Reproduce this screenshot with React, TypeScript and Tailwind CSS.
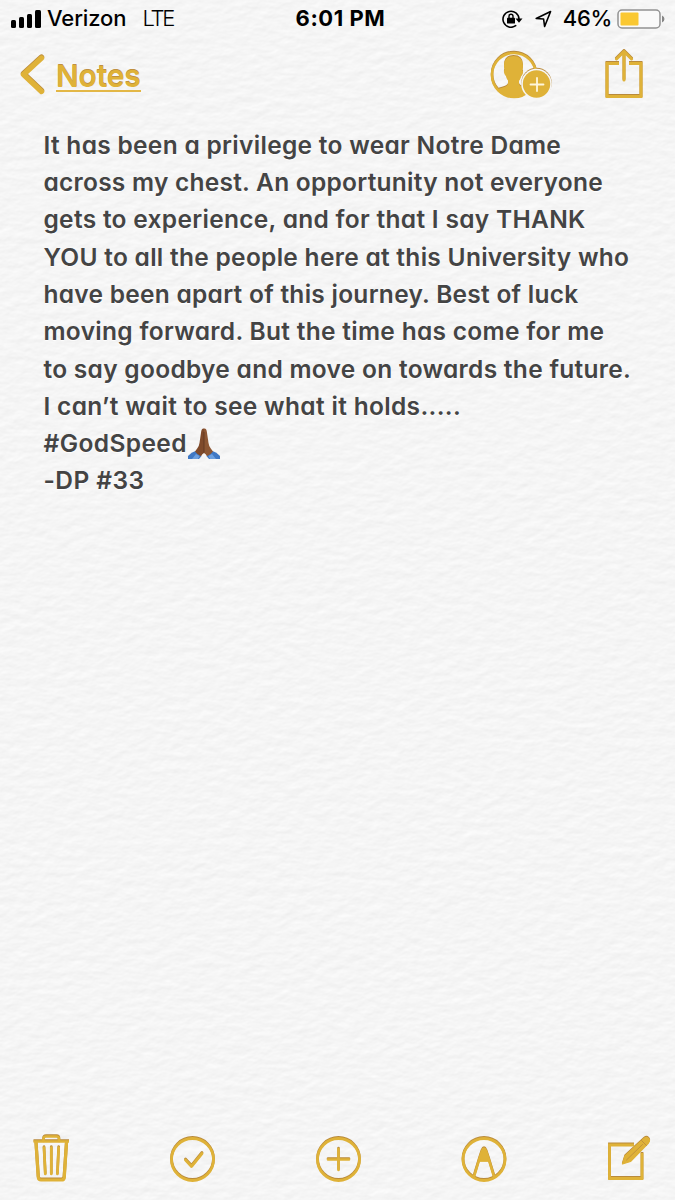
import type { ReactNode } from "react";

interface NoteLine {
  text: string;
  className: string;
  emoji?: boolean;
}

const noteLines: NoteLine[] = [
  { text: "It has been a privilege to wear Notre Dame", className: "tracking-[0.3px]" },
  { text: "across my chest. An opportunity not everyone", className: "tracking-[0.25px]" },
  { text: "gets to experience, and for that I say THANK", className: "tracking-[0.3px]" },
  { text: "YOU to all the people here at this University who", className: "tracking-[0.29px]" },
  { text: "have been apart of this journey. Best of luck", className: "tracking-[0.27px]" },
  { text: "moving forward. But the time has come for me", className: "tracking-[0.31px]" },
  { text: "to say goodbye and move on towards the future.", className: "tracking-[0.29px]" },
  { text: "I can’t wait to see what it holds.....", className: "tracking-[0.33px]" },
  { text: "#GodSpeed", className: "tracking-[0.4px]", emoji: true },
  { text: "-DP #33", className: "tracking-[0.45px]" },
];

function PaperTexture() {
  return (
    <svg className="absolute inset-0 h-full w-full" aria-hidden="true">
      <filter id="paper" x="0" y="0" width="100%" height="100%" colorInterpolationFilters="sRGB">
        <feTurbulence type="fractalNoise" baseFrequency="0.07 0.12" numOctaves="3" seed="8" />
        <feColorMatrix values="0 0 0 0 0  0 0 0 0 0  0 0 0 0 0  1 0 0 0 0" />
        <feDiffuseLighting surfaceScale="0.15" diffuseConstant="1.11" lightingColor="#ffffff">
          <feDistantLight azimuth="250" elevation="60" />
        </feDiffuseLighting>
      </filter>
      <rect width="100%" height="100%" filter="url(#paper)" />
    </svg>
  );
}

function Icon({
  width,
  height,
  children,
}: {
  width: number;
  height: number;
  children: ReactNode;
}) {
  return (
    <svg
      width={width}
      height={height}
      viewBox={`0 0 ${width} ${height}`}
      fill="none"
      stroke="#dfb238"
      strokeLinecap="round"
      strokeLinejoin="round"
      className="block shrink-0 overflow-visible drop-shadow-[0_-0.6px_0_#b98a3c]"
    >
      {children}
    </svg>
  );
}

function PrayingHands() {
  return (
    <svg width="32" height="32" viewBox="0 0 32 32" className="ml-[1px] block">
      <path d="M0 31v-3q3.500-4 7.500-5l6 5-2.500 3z" fill="#3f78c4" />
      <path d="M32 31v-3q-3.500-4-7.500-5l-6 5 2.500 3z" fill="#3f78c4" />
      <path d="M4 31l4-5 3.500 2-1.500 3z" fill="#6c9fdf" />
      <path d="M28 31l-4-5-3.500 2 1.500 3z" fill="#6c9fdf" />
      <path
        d="M16 .5q-2.300-.5-2.800 3L11.500 15q-.5 3.500-2.300 5.500L7 23.500q2.500 3.300 6 4.800 1.200-2.200 3-3.300z"
        fill="#7f4a2b"
      />
      <path
        d="M16 .5q2.300-.5 2.800 3L20.500 15q.5 3.500 2.300 5.500l2.200 3q-2.500 3.300-6 4.800-1.200-2.200-3-3.300z"
        fill="#8d5734"
      />
      <path d="M16 4v20.500" fill="none" stroke="#5d3520" strokeWidth=".8" />
    </svg>
  );
}

function StatusBar() {
  return (
    <header className="grid h-[37px] grid-cols-[1fr_auto_1fr] items-center pr-[10px] pl-[11px] text-[22px] font-medium text-black">
      <div className="flex items-center">
        <div className="flex items-end gap-[3px]">
          <span className="h-[8px] w-[5px] rounded-[1.5px] bg-black" />
          <span className="h-[11px] w-[5px] rounded-[1.5px] bg-black" />
          <span className="h-[14px] w-[5px] rounded-[1.5px] bg-black" />
          <span className="h-[18px] w-[6px] rounded-[1.5px] bg-black" />
        </div>
        <span className="ml-[6px] tracking-[-0.1px]">Verizon</span>
        <span className="ml-[16px] font-light tracking-[-2.200px]">LTE</span>
      </div>
      <span className="ml-[5px] font-bold tracking-[0.550px]">6:01 PM</span>
      <div className="flex items-center justify-end">
        <svg width="21" height="18" viewBox="0 0 21 18" fill="none">
          <path
            d="M13.700 15.700A8 8 0 1 1 17 9"
            stroke="#000"
            strokeWidth="1.600"
            strokeLinecap="round"
          />
          <path d="M13.500 8.500h7L17 12.800z" fill="#000" />
          <rect x="5" y="7.800" width="8" height="5.800" rx=".7" fill="#000" />
          <path d="M7 8V6.200q0-2 2-2t2 2V8" stroke="#000" strokeWidth="1.400" />
        </svg>
        <svg width="17" height="18" viewBox="0 0 17 18" fill="none" className="ml-[12px]">
          <path
            d="M1.200 8.500 15.600 1.500 9.600 16.500 8.600 9z"
            stroke="#000"
            strokeWidth="1.600"
            strokeLinejoin="round"
          />
        </svg>
        <span className="ml-[11px] tracking-[-0.3px]">46%</span>
        <svg width="48" height="20" viewBox="0 0 48 20" fill="none" className="ml-[5px]">
          <rect x="1" y="1" width="42" height="18" rx="4" fill="#fafafa" stroke="#929292" strokeWidth="1.500" />
          <rect x="3.500" y="3.500" width="18" height="13" rx="1" fill="#fac832" />
          <path d="M45 6.500q2.500 1 2.500 3.500T45 13.500z" fill="#858585" />
        </svg>
      </div>
    </header>
  );
}

function NavBar() {
  return (
    <nav className="flex h-[76px] items-start justify-between pr-[32px] pl-[20px]">
      <div className="flex items-start">
        <div className="pt-[18px]">
          <Icon width={24} height={39}>
            <path d="M21.500 3 3.500 19.500 21.500 36.500" strokeWidth="5.400" />
          </Icon>
        </div>
        <span className="mt-[20px] ml-[12px] h-[35px] border-b-2 border-[#e3b746] text-[30px] leading-[38px] font-semibold tracking-[-0.2px] text-[#dfb238] [text-shadow:0_-0.7px_0_#c09040]">
          Notes
        </span>
      </div>
      <div className="flex items-start">
        <div className="pt-[14px]">
          <Icon width={62} height={48}>
            <clipPath id="avatar">
              <circle cx="24" cy="24" r="21.500" />
            </clipPath>
            <g clipPath="url(#avatar)">
              <path
                d="M14 14.500q0-9.500 9.500-9.500T33 14.500q0 3-.7 5 1 0 .7 2-.5 3-2 4-.6 3-2 4.500V33q1 2.500 6 3.700 6 1.500 8 4.300v8H4v-8q2-2.800 8-4.300 5-1.200 6-3.700v-3.500q-1.400-1.500-2-4.500-1.500-1-2-4-.3-2 .7-2-.7-2-.7-5z"
                fill="#dfb238"
                stroke="none"
              />
            </g>
            <circle cx="24" cy="24" r="22" strokeWidth="2.600" />
            <circle cx="46.500" cy="33" r="15.300" fill="#f6f6f6" stroke="none" />
            <circle cx="46.500" cy="33" r="13.700" fill="#dfb238" stroke="none" />
            <path d="M40.500 33.500h13M47 27v13" stroke="#fff6dc" strokeWidth="1.800" />
          </Icon>
        </div>
        <div className="ml-[53px] pt-[12px]">
          <Icon width={38} height={50}>
            <path d="M14 14.500H2V47.500h34V14.500H24" strokeWidth="3" strokeLinejoin="miter" strokeLinecap="butt" />
            <path d="M19 31V3M11.500 10 19 2.500l7.500 7.500" strokeWidth="3" />
          </Icon>
        </div>
      </div>
    </nav>
  );
}

function Toolbar() {
  return (
    <footer className="flex h-[82px] items-start justify-between pr-[22px] pl-[33px] pt-[18px]">
      <Icon width={37} height={50}>
        <path d="M.5 5.500h35.500" strokeWidth="2.600" strokeLinecap="butt" />
        <path d="M10.500 5V3q0-2.500 2.500-2.500h10.500Q26 .5 26 3v2" strokeWidth="2.600" />
        <path d="m3 7 2.300 34.500q.2 2.500 2.700 2.500h20.500q2.500 0 2.700-2.500L33.500 7" strokeWidth="3.200" />
        <path d="m11 11.500 1.300 26.500M18.300 11.500v26.500M25.700 11.500l-1.300 26.500" strokeWidth="2.700" />
      </Icon>
      <Icon width={46} height={46}>
        <circle cx="22.500" cy="23.500" r="21" strokeWidth="2.800" />
        <path d="m15.500 24 6 6.500L32 17.500" strokeWidth="2.800" />
      </Icon>
      <Icon width={46} height={46}>
        <circle cx="22.500" cy="23.500" r="21" strokeWidth="2.800" />
        <path d="M12 23.500h21M22.500 13v21" strokeWidth="2.600" />
      </Icon>
      <Icon width={46} height={46}>
        <circle cx="22" cy="23.500" r="21" strokeWidth="2.800" />
        <path d="M12 40.500 17.500 22.500 20 15q2-5 4 0l2.500 7.500L32 40.500" strokeWidth="2.600" />
        <path d="M17.500 25l3-10q1.500-4 3 0l3 10z" fill="#dfb238" strokeWidth="1" />
      </Icon>
      <Icon width={45} height={46}>
        <path d="M26 9H1.500v33.500H34V17" strokeWidth="2.800" strokeLinecap="butt" strokeLinejoin="miter" />
        <path d="M14.500 28 17 20 36 2.500q2.500-2 4.500 0t0 4.500L22.500 25.500z" fill="#dfb238" strokeWidth="1.200" />
        <path d="m18.500 24 16-15.500M33.500 4.500l5 5" stroke="#b98a3c" strokeWidth=".8" />
      </Icon>
    </footer>
  );
}

export default function App() {
  return (
    <div className="relative h-[1200px] w-[675px] overflow-hidden bg-[#f5f5f5] font-['Inter',sans-serif]">
      <PaperTexture />
      <div className="relative flex h-full flex-col">
        <StatusBar />
        <NavBar />
        <main className="flex-1 pt-[13.500px] pl-[43.500px] text-[24.500px] font-semibold text-[#444444] [font-feature-settings:'cv11'] [text-shadow:0_1px_1px_#fff]">
          {noteLines.map((line) => (
            <p key={line.text} className="flex h-[37.300px] items-center whitespace-nowrap">
              <span className={line.className}>{line.text}</span>
              {line.emoji && <PrayingHands />}
            </p>
          ))}
        </main>
        <Toolbar />
      </div>
    </div>
  );
}
